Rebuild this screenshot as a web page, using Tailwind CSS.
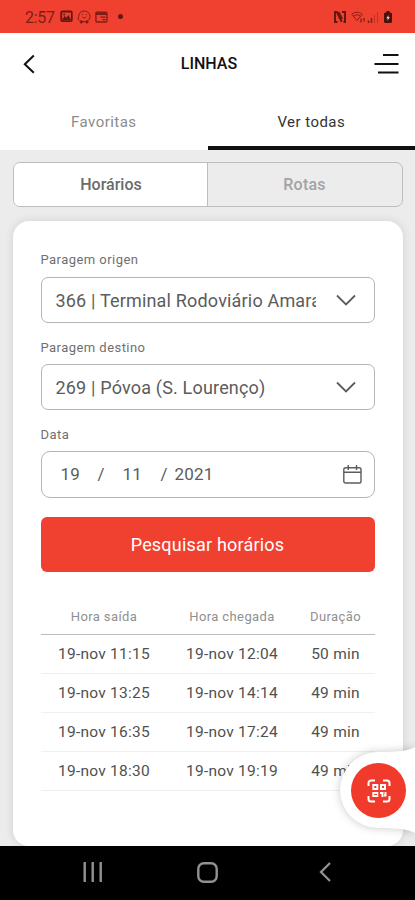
<!DOCTYPE html>
<html lang="pt">
<head>
    <meta charset="UTF-8">
    <meta name="viewport" content="width=device-width, initial-scale=1.0">
    <title>Linhas</title>
    <script src="https://cdn.jsdelivr.net/npm/@tailwindcss/browser@4"></script>
</head>
<body class="bg-[#ececec] font-[Roboto,sans-serif] text-[#5c5c5c]">
    <div class="relative flex flex-col w-[415px] h-[900px] overflow-hidden">
        <!-- Status bar -->
        <div class="flex items-center justify-between h-[33px] shrink-0 bg-[#f04130] pl-[25px] pr-[23px] text-[#7d1d17]">
            <div class="flex items-center">
                <span class="w-[35px] text-[16px] leading-none tracking-[-0.3px] pt-0.5">2:57</span>
                <svg class="w-[13px] h-[13px]" viewBox="0 0 13 13" fill="none" stroke="#641812" stroke-width="1.8">
                    <rect x="1.2" y="1.5" width="10.6" height="9.6" rx="1"/>
                    <path d="M2 10l2.500-4 2 1.500 2-2.500 2.500 5z" fill="#641812" stroke="none"/>
                    <circle cx="4.2" cy="4.4" r="1" fill="#641812" stroke="none"/>
                </svg>
                <svg class="w-[14px] h-[14px] ml-[4px]" viewBox="0 0 14 14" fill="none" stroke="currentColor" stroke-width="1">
                    <path d="M2.5 10.6C.9 9.7.8 8.8 1.6 8 1.4 3.5 3.8 1 7.3 1c3.5 0 5.7 2.5 5.7 5.3 0 2.3-1.2 3.9-2.7 4.7M6 11.700h2.500"/>
                    <path d="M5.3 6.7c.6 1.7 3.4 1.7 4 0"/>
                    <circle cx="4.3" cy="11.9" r="1.2" fill="currentColor"/>
                    <circle cx="9.9" cy="11.9" r="1.2" fill="currentColor"/>
                    <circle cx="5.4" cy="4.6" r=".3"/>
                    <circle cx="9.2" cy="4.6" r=".3"/>
                </svg>
                <svg class="w-[13px] h-[12px] ml-[4px]" viewBox="0 0 13 12" fill="none" stroke="currentColor" stroke-width="1.3">
                    <rect x=".9" y="1.2" width="11" height="9.8" rx="1"/>
                    <path d="M1 2.700h11" stroke-width="2.6"/>
                    <path d="M5.500 6.200h5M7.500 8.600h3"/>
                </svg>
                <span class="w-[5px] h-[5px] rounded-full bg-[#641812] ml-[10px]"></span>
            </div>
            <div class="flex items-center">
                <svg class="w-[12px] h-[12px]" viewBox="0 0 12 12" fill="none" stroke="#641812" stroke-width="2">
                    <path d="M3.500 11H1V1h1.800l5 9.800M8 1h3v10H9.500M4.500 1l3.500 7"/>
                </svg>
                <svg class="w-[15px] h-[12px] ml-[5px]" viewBox="0 0 15 12" fill="none" stroke="currentColor" stroke-width=".9">
                    <path d="M.8 3.300C3.500.6 8.500.6 11.200 3.300L6 9.500zM2.500 5.200c2-1.800 5-1.800 7 0"/>
                    <path d="M10 7.500v4M13 10.500V7" stroke-width="1.3"/>
                </svg>
                <svg class="w-[12px] h-[12px] ml-[1px]" viewBox="0 0 12 12" fill="none" stroke="currentColor">
                    <path d="M1.500 12V9.500M4.500 12V7" stroke-width="1.5"/>
                    <path d="M7.500 12V4M10.500 12V1" stroke-width=".8" opacity=".5"/>
                </svg>
                <svg class="w-[8px] h-[12px] ml-[5px]" viewBox="0 0 8 12">
                    <path d="M2.500 0h3v2h-3z" fill="#4d110d"/>
                    <rect y="1.5" width="8" height="10.5" rx="1.5" fill="#4d110d"/>
                    <path d="M4.700 4L2.300 7.200h1.500L3.400 9.800l2.400-3.500H4.300z" fill="#ffd9d4"/>
                </svg>
            </div>
        </div>

        <!-- Header -->
        <header class="flex items-center justify-between h-[61px] shrink-0 bg-white pl-[23px] pr-[16px] text-[#111]">
            <svg class="w-[12px] h-[20px]" viewBox="0 0 12 20" fill="none" stroke="currentColor" stroke-width="2">
                <path d="M10.800 1.500L1.800 10.200l9 8.600"/>
            </svg>
            <h1 class="text-[16px] font-medium pl-[9px]">LINHAS</h1>
            <svg class="w-[25px] h-[22px]" viewBox="0 0 25 22" fill="none" stroke="currentColor" stroke-width="2">
                <path d="M9 2h15.500M.5 11h24M4 19.500h20.500"/>
            </svg>
        </header>

        <!-- Tabs -->
        <nav class="grid grid-cols-2 h-[56px] shrink-0 bg-white text-[15px] text-center tracking-[0.45px]">
            <a class="pt-[16.5px] text-[#8c8c8c]">Favoritas</a>
            <a class="pt-[16.5px] text-[#333] border-b-[4px] border-[#111]">Ver todas</a>
        </nav>

        <main class="flex flex-col px-[12.5px]">
            <div class="grid grid-cols-2 h-[45px] mt-[12px] shrink-0 border-[1.5px] border-[#bdbdbd] rounded-[7px] overflow-hidden text-[16px] text-center leading-[43px]">
                <span class="bg-white font-medium text-[#6b6b6b] border-r border-[#bdbdbd] pl-[2px]">Horários</span>
                <span class="font-medium text-[#a3a3a3] tracking-[0.2px]">Rotas</span>
            </div>

            <div class="flex flex-col h-[625px] mt-[14px] shrink-0 bg-white rounded-[16px] px-[28px] shadow-[0_0_10px_rgba(0,0,0,0.12)]">
                <label class="mt-[28px] h-[20px] text-[13px] leading-[21px] tracking-[0.45px] text-[#707070]">Paragem origen</label>
                <div class="flex items-center justify-between h-[46px] mt-[8px] border border-[#b5b5b5] rounded-[7px] pl-[14px] pr-[18px]">
                    <span class="w-[260px] overflow-hidden whitespace-nowrap text-[18px] tracking-[0.18px]">366 | Terminal Rodoviário Amaral</span>
                    <svg class="w-[20px] h-[12px]" viewBox="0 0 20 12" fill="none" stroke="currentColor" stroke-width="1.8"><path d="M1 1.500l9 9 9-9"/></svg>
                </div>
                <label class="mt-[14px] h-[20px] text-[13px] leading-[21px] tracking-[0.45px] text-[#707070]">Paragem destino</label>
                <div class="flex items-center justify-between h-[46px] mt-[7px] border border-[#b5b5b5] rounded-[7px] pl-[14px] pr-[18px]">
                    <span class="w-[260px] overflow-hidden whitespace-nowrap text-[18px] tracking-[0.18px]">269 | Póvoa (S. Lourenço)</span>
                    <svg class="w-[20px] h-[12px]" viewBox="0 0 20 12" fill="none" stroke="currentColor" stroke-width="1.8"><path d="M1 1.500l9 9 9-9"/></svg>
                </div>
                <label class="mt-[14px] h-[20px] text-[13px] leading-[21px] tracking-[0.45px] text-[#707070]">Data</label>
                <div class="flex items-center h-[47px] mt-[7px] border border-[#b5b5b5] rounded-[9px] pl-[19px] pr-[12px] text-[17px] tracking-[0.2px]">
                    <span class="w-[37px]">19</span>
                    <span class="w-[25px]">/</span>
                    <span class="w-[38px]">11</span>
                    <span class="w-[14px]">/</span>
                    <span>2021</span>
                    <svg class="w-[19px] h-[19px] ml-auto" viewBox="0 0 19 19" fill="none" stroke="currentColor" stroke-width="1.4">
                        <rect x=".8" y="2.8" width="17.2" height="15.2" rx="1.8"/>
                        <path d="M1 7.300h17M5.300 0v5M13.500 0v5"/>
                    </svg>
                </div>
                <button class="h-[55px] mt-[19px] shrink-0 rounded-[6px] bg-[#f04130] text-white text-[18px] tracking-[0.2px]">Pesquisar horários</button>

                <table class="mt-[26px] w-full table-fixed text-center">
                    <colgroup><col class="w-[127px]"><col class="w-[129px]"><col></colgroup>
                    <thead class="text-[13px] text-[#909090] tracking-[0.4px]">
                        <tr class="h-[36px] border-b border-[#bbb]">
                            <th class="font-normal pt-[2px]">Hora saída</th>
                            <th class="font-normal pt-[2px]">Hora chegada</th>
                            <th class="font-normal pt-[2px]">Duração</th>
                        </tr>
                    </thead>
                    <tbody class="text-[15.5px] text-[#505050] tracking-[0.25px]">
                        <tr class="h-[39px] border-b border-[#f0f0f0]"><td class="pt-[2px]">19-nov 11:15</td><td class="pt-[2px]">19-nov 12:04</td><td class="pt-[2px]">50 min</td></tr>
                        <tr class="h-[39px] border-b border-[#f0f0f0]"><td class="pt-[2px]">19-nov 13:25</td><td class="pt-[2px]">19-nov 14:14</td><td class="pt-[2px]">49 min</td></tr>
                        <tr class="h-[39px] border-b border-[#f0f0f0]"><td class="pt-[2px]">19-nov 16:35</td><td class="pt-[2px]">19-nov 17:24</td><td class="pt-[2px]">49 min</td></tr>
                        <tr class="h-[39px] border-b border-[#f0f0f0]"><td class="pt-[2px]">19-nov 18:30</td><td class="pt-[2px]">19-nov 19:19</td><td class="pt-[2px]">49 min</td></tr>
                    </tbody>
                </table>
            </div>
        </main>

        <!-- Floating QR button -->
        <div class="absolute right-0 top-[735px] w-[85px] h-[111px]">
            <svg class="w-full h-full drop-shadow-[0_0_4px_rgba(0,0,0,0.22)]" viewBox="0 0 85 111">
                <path d="M90 8C82 16 72 16.500 48 17a38 38 0 0 0 0 76c24 .5 34 1 42 9z" fill="#fff"/>
            </svg>
            <button class="absolute left-[21px] top-[28px] flex items-center justify-center w-[55px] h-[55px] rounded-full bg-[#f03a2b] text-white">
                <svg class="w-[24px] h-[24px]" viewBox="0 0 24 24" fill="none" stroke="currentColor" stroke-width="2">
                    <path d="M1.500 7V4a2.500 2.500 0 0 1 2.500-2.500h4M16 1.500h4A2.500 2.500 0 0 1 22.500 4v3M22.500 17v3a2.500 2.500 0 0 1-2.500 2.500h-4M8 22.500H4A2.500 2.500 0 0 1 1.500 20v-3"/>
                    <rect x="6.3" y="6" width="4" height="4"/>
                    <rect x="14" y="6" width="4" height="4"/>
                    <rect x="6.3" y="14" width="4" height="3"/>
                    <path d="M13 14h2.500v4M18.500 13v3.500H17"/>
                </svg>
            </button>
        </div>

        <!-- System navigation -->
        <div class="absolute bottom-0 left-0 flex items-center justify-between w-full h-[54px] bg-black pl-[83px] pr-[84px] text-[#929292]">
            <svg class="w-[20px] h-[20px] mb-[2px]" viewBox="0 0 20 20" fill="none" stroke="currentColor" stroke-width="2.4"><path d="M1.700 0v20M9.700 0v20M17.700 0v20"/></svg>
            <svg class="w-[21px] h-[21px] -ml-[7px] mb-[2px]" viewBox="0 0 21 21" fill="none" stroke="currentColor" stroke-width="2.4"><rect x="1.3" y="1.3" width="18.4" height="18.4" rx="5.5"/></svg>
            <svg class="w-[12px] h-[20px] mb-[2px]" viewBox="0 0 12 20" fill="none" stroke="currentColor" stroke-width="2.3"><path d="M11 1L2 10l9 9"/></svg>
        </div>
    </div>
</body>
</html>
